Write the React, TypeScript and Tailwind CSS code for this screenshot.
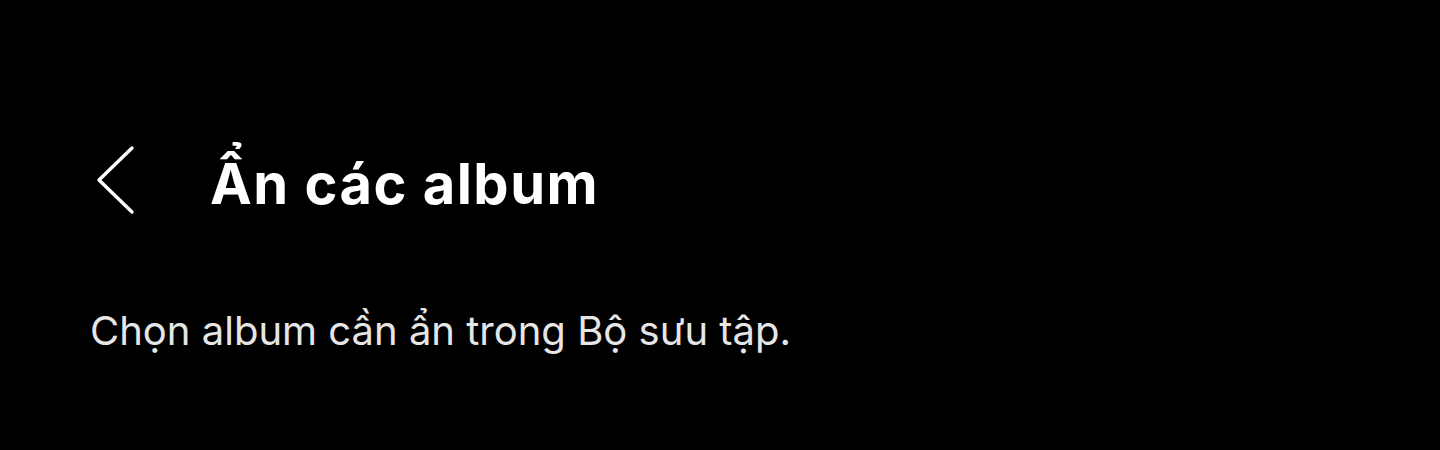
import React from 'react';

const App = () => {
  return (
    <div className="w-[1440px] h-[450px] bg-black overflow-hidden" style={{ fontFamily: 'Inter, "Noto Sans", sans-serif' }}>
      <div className="flex items-start pt-[145px] pl-[96px]">
        <button className="w-[40px] h-[70px] flex items-center justify-center text-white">
          <svg width="40" height="70" viewBox="0 0 40 70" fill="none" stroke="currentColor" strokeWidth="3.4" strokeLinecap="round" strokeLinejoin="round">
            <path d="M36 3 L3 35 L36 67" />
          </svg>
        </button>
        <h1 className="ml-[74px] mt-[11px] text-[56px] font-bold text-white tracking-[1.5px] leading-none">Ẩn các album</h1>
      </div>
      <p className="pl-[90px] mt-[96px] text-[40px] text-[#e6e6e6] leading-none">Chọn album cần ẩn trong Bộ sưu tập.</p>
    </div>
  );
};

export default App;
